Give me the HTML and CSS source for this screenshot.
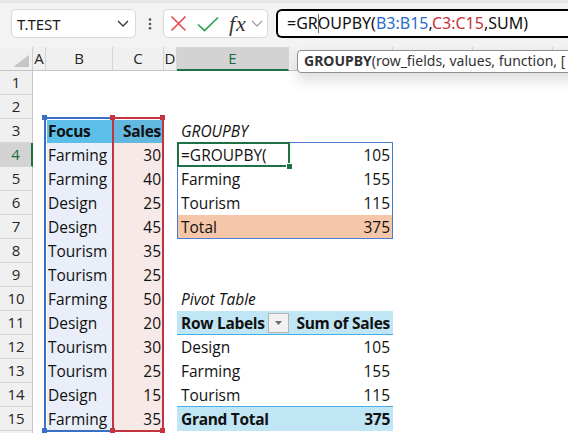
FILE: index.html
```html
<!DOCTYPE html>
<html lang="en">
<head>
<meta charset="utf-8">
<title>GROUPBY</title>
<link rel="stylesheet" href="styles.css">
</head>
<body>
<div class="toolbar">
  <div class="namebox"><span>T.TEST</span><svg class="chev" width="12" height="7" viewBox="0 0 12 7"><path d="M1 1 L6 6 L11 1" fill="none" stroke="#333" stroke-width="1.3"/></svg></div>
  <div class="dots"><svg width="4" height="12" viewBox="0 0 4 12"><circle cx="2" cy="1.6" r="1.3" fill="#555"/><circle cx="2" cy="6" r="1.3" fill="#555"/><circle cx="2" cy="10.3" r="1.3" fill="#555"/></svg></div>
  <div class="fxgroup">
    <svg class="ic-x" width="17" height="17" viewBox="0 0 17 17"><path d="M1.5 1.5 L15.5 15.5 M15.5 1.5 L1.5 15.5" stroke="#e5484d" stroke-width="1.6" fill="none"/></svg>
    <svg class="ic-ok" width="22" height="16" viewBox="0 0 22 16"><path d="M1 8.5 L7.5 14.5 L21 1.5" stroke="#2f9e54" stroke-width="1.7" fill="none"/></svg>
    <span class="fx">fx</span>
    <svg class="ic-dd" width="12" height="7" viewBox="0 0 12 7"><path d="M1 1 L6 6 L11 1" fill="none" stroke="#9a9a9a" stroke-width="1.2"/></svg>
  </div>
  <div class="formula">=GR<span class="caret"></span>OUPBY(<span class="ref-b">B3:B15</span>,<span class="ref-c">C3:C15</span>,SUM)</div>
</div>

<div class="sheet">
  <div class="corner"><span class="tri"></span></div>
  <div class="ch">A</div><div class="ch">B</div><div class="ch">C</div><div class="ch">D</div><div class="ch ch-sel">E</div><div class="ch"></div>
  <div class="ch-rest"><div class="ch"></div><div class="ch"></div><div class="ch"></div></div>

  <div class="rh">1</div><div class="span7"></div>
  <div class="rh">2</div><div class="span7"></div>

  <div class="rh">3</div><div></div><div class="c bcol b-head">Focus</div><div class="c num c-head">Sales</div><div></div><div class="c ital">GROUPBY</div><div class="span2"></div>

  <div class="rh rh-sel">4</div><div></div><div class="c bcol b-body">Farming</div><div class="c num c-body">30</div><div></div><div class="c">=GROUPBY(</div><div class="c num">105</div><div></div>
  <div class="rh">5</div><div></div><div class="c bcol b-body">Farming</div><div class="c num c-body">40</div><div></div><div class="c">Farming</div><div class="c num">155</div><div></div>
  <div class="rh">6</div><div></div><div class="c bcol b-body">Design</div><div class="c num c-body">25</div><div></div><div class="c">Tourism</div><div class="c num">115</div><div></div>
  <div class="rh">7</div><div></div><div class="c bcol b-body">Design</div><div class="c num c-body">45</div><div></div><div class="c total">Total</div><div class="c num total">375</div><div></div>
  <div class="rh">8</div><div></div><div class="c bcol b-body">Tourism</div><div class="c num c-body">35</div><div class="span4"></div>
  <div class="rh">9</div><div></div><div class="c bcol b-body">Tourism</div><div class="c num c-body">25</div><div class="span4"></div>
  <div class="rh">10</div><div></div><div class="c bcol b-body">Farming</div><div class="c num c-body">50</div><div></div><div class="c ital">Pivot Table</div><div class="span2"></div>
  <div class="rh">11</div><div></div><div class="c bcol b-body">Design</div><div class="c num c-body">20</div><div></div>
  <div class="c pv-head pv-lab"><span>Row Labels</span><span class="pv-btn"><svg width="7" height="4" viewBox="0 0 7 4"><path d="M0 0 H7 L3.5 4 Z" fill="#6b6b6b"/></svg></span></div><div class="c num pv-head">Sum of Sales</div><div></div>
  <div class="rh">12</div><div></div><div class="c bcol b-body">Tourism</div><div class="c num c-body">30</div><div></div><div class="c">Design</div><div class="c num">105</div><div></div>
  <div class="rh">13</div><div></div><div class="c bcol b-body">Tourism</div><div class="c num c-body">25</div><div></div><div class="c">Farming</div><div class="c num">155</div><div></div>
  <div class="rh">14</div><div></div><div class="c bcol b-body">Design</div><div class="c num c-body">15</div><div></div><div class="c pv-last">Tourism</div><div class="c num pv-last">115</div><div></div>
  <div class="rh">15</div><div></div><div class="c bcol b-body">Farming</div><div class="c num c-body">35</div><div></div><div class="c pv-tot">Grand Total</div><div class="c num pv-tot">375</div><div></div>
  <div class="rh"></div><div class="span7"></div>

  <div class="rng rng-b"></div>
  <div class="rng rng-c"></div>
  <div class="spill"></div>
  <div class="sel"></div>
  <div class="tip"><b>GROUPBY</b>(row_fields, values, function, [</div>
</div>
</body>
</html>
```

FILE: styles.css
```css
html, body {
  margin: 0;
  width: 568px;
  height: 433px;
  overflow: hidden;
  background: #fff;
}

body {
  font-family: "Open Sans", "Liberation Sans", sans-serif;
  color: #111;
}

/* ---------- toolbar ---------- */
.toolbar {
  box-sizing: border-box;
  height: 47px;
  display: flex;
  align-items: flex-start;
  padding: 6px 0 0 11px;
  background: #f3f3f3;
  border-top: 3px solid #e6e6e6;
  font-family: "Noto Sans", "Open Sans", sans-serif;
}

.namebox {
  box-sizing: border-box;
  width: 125px;
  height: 29px;
  display: flex;
  align-items: center;
  justify-content: space-between;
  padding: 0 6px 0 5px;
  background: #fff;
  border: 1px solid #d9d9d9;
  border-radius: 5px;
  font-size: 15px;
  color: #1a1a1a;
}

.dots {
  width: 27px;
  height: 29px;
  display: flex;
  align-items: center;
  justify-content: center;
}

.fxgroup {
  box-sizing: border-box;
  width: 105px;
  height: 29px;
  display: flex;
  align-items: center;
  padding-left: 6px;
  background: #fff;
  border: 1px solid #d9d9d9;
  border-radius: 5px;
}

.ic-ok { margin-left: 10px; }

.fx {
  margin-left: 10px;
  font-family: "Liberation Serif", serif;
  font-style: italic;
  font-size: 22px;
  letter-spacing: 1px;
  line-height: 22px;
  color: #333;
}

.ic-dd { margin-left: 4px; }

.formula {
  box-sizing: border-box;
  flex: 1;
  height: 29px;
  margin-left: 8px;
  padding-left: 9px;
  background: #fff;
  border: 2px solid #000;
  border-right: none;
  border-radius: 6px 0 0 6px;
  font-size: 16px;
  line-height: 25px;
  white-space: nowrap;
  color: #111;
}

.caret {
  display: inline-block;
  width: 0;
  height: 19px;
  margin-right: -1px;
  border-left: 1px solid #777;
  vertical-align: -4px;
}

.ref-b { color: #2a6ccf; }
.ref-c { color: #c8313c; }

/* ---------- sheet ---------- */
.sheet {
  position: relative;
  display: grid;
  grid-template-columns: 33px 13px 67px 51px 13px 112px 104px 1fr;
  grid-auto-rows: 24px;
}

.corner, .ch, .rh {
  box-sizing: border-box;
  background: #f0f0f0;
  font-size: 15px;
  color: #262626;
  text-align: center;
  line-height: 23px;
}

.corner {
  position: relative;
  border-right: 1px solid #cfcfcf;
  border-bottom: 1px solid #c4c4c4;
}

.tri {
  position: absolute;
  right: 3px;
  bottom: 3px;
  width: 0;
  height: 0;
  border-left: 16px solid transparent;
  border-bottom: 12px solid #c6c6c6;
}

.ch {
  border-right: 1px solid #d4d4d4;
  border-bottom: 1px solid #c4c4c4;
}

.ch-sel {
  background: #d3d3d3;
  color: #1d6b3c;
  border-bottom: 2px solid #1e7145;
}

.ch-rest {
  display: flex;
  background: #f0f0f0;
  border-bottom: 1px solid #c4c4c4;
  box-sizing: border-box;
}

.ch-rest .ch {
  flex: 0 0 80px;
  border-bottom: none;
}

.rh {
  border-right: 1px solid #c6c6c6;
  border-bottom: 1px solid #d6d6d6;
}

.rh-sel {
  background: #d3d3d3;
  color: #1d6b3c;
  border-right: 2px solid #1e7145;
}

.span2 { grid-column: span 2; }
.span4 { grid-column: span 4; }
.span7 { grid-column: span 7; }

.c {
  box-sizing: border-box;
  padding: 0 3px 0 4px;
  font-size: 15.5px;
  line-height: 24px;
  white-space: nowrap;
  color: #111;
}

.bcol { padding-left: 2px; }
.num { text-align: right; padding-right: 3px; }
.ital { font-style: italic; }

.b-head, .c-head { font-weight: 700; letter-spacing: -0.3px; }
.b-head { background: #5cbfea; box-shadow: inset 1px 1px 0 #fff; }
.c-head { background: #63b8e0; box-shadow: inset 1px 1px 0 #fff; }
.b-body { background: #e9eef8; box-shadow: inset 1px 0 0 #fff; }
.c-body { background: #f8e9e9; box-shadow: inset 1px 0 0 #fff; }

.total { background: #f5c6a8; }

.pv-head {
  background: #c0e5f5;
  font-weight: 700;
  letter-spacing: -0.3px;
  border-bottom: 1px solid #45b0e3;
}

.pv-lab {
  display: flex;
  align-items: center;
  justify-content: space-between;
  padding-right: 0;
}

.pv-btn {
  box-sizing: border-box;
  width: 21px;
  height: 20px;
  display: flex;
  align-items: center;
  justify-content: center;
  background: #f1f1f1;
  border: 1px solid #b3b3b3;
}

.pv-last { border-bottom: 1px solid #45b0e3; }

.pv-tot {
  background: #c0e5f5;
  font-weight: 700;
  letter-spacing: -0.3px;
}

/* ---------- overlays ---------- */
.rng {
  position: absolute;
  border: 2px solid;
}

.rng::before {
  content: "";
  position: absolute;
  top: -4px;
  left: -4px;
  width: 5px;
  height: 5px;
}

.rng-b {
  grid-area: 4 / 3 / 17 / 4;
  top: -2px;
  left: -2px;
  right: -1px;
  bottom: -1px;
  border-color: #3a6fc6;
}

.rng-b::before {
  background: #3a6fc6;
  box-shadow: 0 313px 0 #3a6fc6;
}

.rng-c {
  grid-area: 4 / 4 / 17 / 5;
  top: -2px;
  left: -1px;
  right: 0;
  bottom: -1px;
  border-color: #c4343f;
}

.rng-c::before {
  background: #c4343f;
  box-shadow: 50px 0 0 #c4343f, 0 313px 0 #c4343f, 50px 313px 0 #c4343f;
}

.spill {
  position: absolute;
  grid-area: 5 / 6 / 9 / 8;
  top: -1px;
  left: 0;
  right: 0;
  bottom: 0;
  border: 1px solid #4a7bd0;
}

.sel {
  position: absolute;
  grid-area: 5 / 6 / 6 / 7;
  top: -1px;
  left: 0;
  right: -1px;
  bottom: 0;
  border: 2px solid #1e7145;
}

.sel::after {
  content: "";
  position: absolute;
  right: -4px;
  bottom: -4px;
  width: 5px;
  height: 5px;
  background: #1e7145;
  border-left: 1px solid #fff;
  border-top: 1px solid #fff;
}

.tip {
  position: absolute;
  grid-area: 1 / 7 / 2 / 9;
  top: 3px;
  left: 8px;
  right: -20px;
  box-sizing: border-box;
  height: 23px;
  padding-left: 6px;
  background: #fff;
  border: 1px solid #8f8f8f;
  border-radius: 4px;
  box-shadow: 0 8px 14px rgba(0, 0, 0, 0.13);
  font-family: "Noto Sans", "Open Sans", sans-serif;
  font-size: 14px;
  line-height: 20px;
  color: #333;
  white-space: nowrap;
  overflow: hidden;
}

.tip b { font-weight: 700; }
```
